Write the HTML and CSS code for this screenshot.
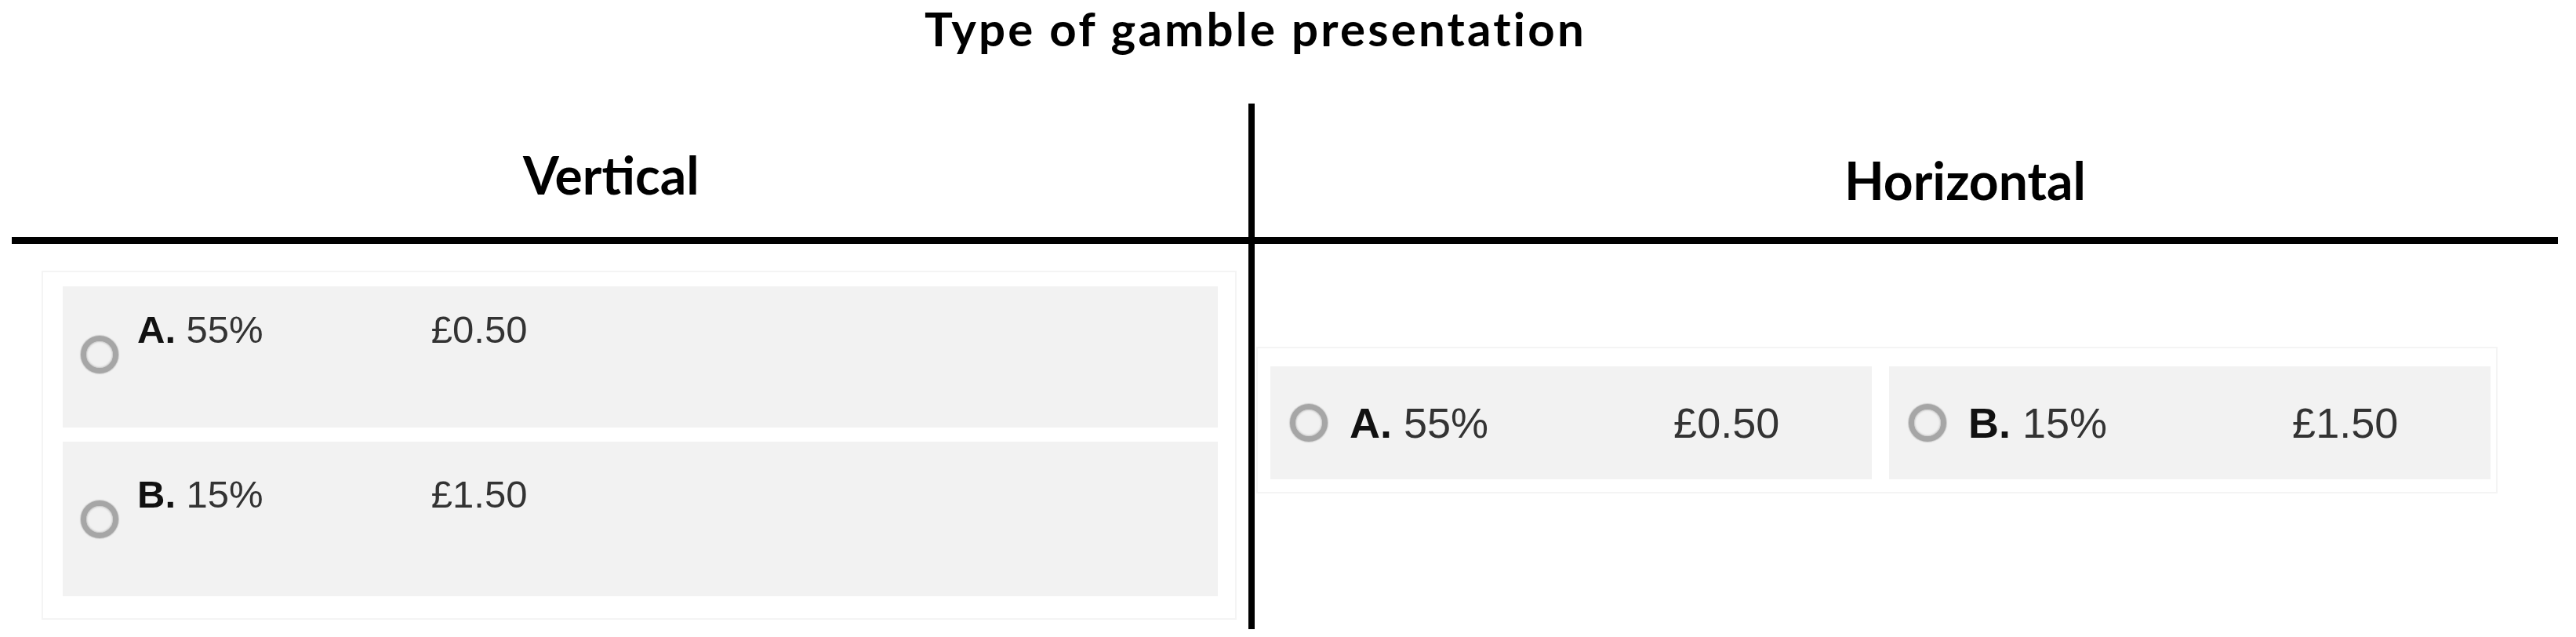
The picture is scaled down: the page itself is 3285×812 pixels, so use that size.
FILE: index.html
```html
<!DOCTYPE html>
<html lang="en">
<head>
<meta charset="utf-8">
<title>Type of gamble presentation</title>
<link rel="stylesheet" href="styles.css">
</head>
<body>
<div class="page">
  <div class="title">Type of gamble presentation</div>
  <div class="table">
    <div class="head head-v">Vertical</div>
    <div class="divider"></div>
    <div class="head head-h">Horizontal</div>
    <div class="rule"></div>
    <div class="cell cell-v">
      <div class="frame frame-v">
        <div class="option option-v option-a">
          <span class="radio"></span>
          <span class="label"><b>A.</b> 55%</span>
          <span class="amount">£0.50</span>
        </div>
        <div class="option option-v option-b">
          <span class="radio"></span>
          <span class="label"><b>B.</b> 15%</span>
          <span class="amount">£1.50</span>
        </div>
      </div>
    </div>
    <div class="cell cell-h">
      <div class="frame frame-h">
        <div class="option option-h">
          <span class="radio"></span>
          <span class="label"><b>A.</b> 55%</span>
          <span class="amount">£0.50</span>
        </div>
        <div class="option option-h">
          <span class="radio"></span>
          <span class="label"><b>B.</b> 15%</span>
          <span class="amount">£1.50</span>
        </div>
      </div>
    </div>
  </div>
</div>
</body>
</html>
```

FILE: styles.css
```css
* {
  box-sizing: border-box;
}

html, body {
  margin: 0;
  padding: 0;
  background: #ffffff;
}

.page {
  width: 3285px;
  height: 812px;
  overflow: hidden;
  color: #000;
}

.title {
  width: 3202px;
  height: 132px;
  padding-top: 0;
  text-align: center;
  font-family: Lato, "Open Sans", sans-serif;
  font-weight: 700;
  font-size: 60px;
  line-height: 72px;
  letter-spacing: 3.2px;
}

.table {
  display: grid;
  margin-left: 15px;
  grid-template-columns: 1577px 8px 1662px;
  grid-template-rows: 170px 9px 491px;
}

.head {
  font-family: Lato, "Open Sans", sans-serif;
  font-weight: 700;
  font-size: 66px;
  line-height: 79px;
  white-space: nowrap;
}

.head-v {
  grid-column: 1;
  grid-row: 1;
  padding-left: 652px;
  padding-top: 51px;
}

.head-h {
  grid-column: 3;
  grid-row: 1;
  padding-left: 752px;
  padding-top: 58px;
}

.divider {
  grid-column: 2;
  grid-row: 1 / 4;
  background: #000;
}

.rule {
  grid-column: 1 / 4;
  grid-row: 2;
  background: #000;
}

.cell-v {
  grid-column: 1;
  grid-row: 3;
}

.cell-h {
  grid-column: 3;
  grid-row: 3;
}

.frame {
  border: 2px solid #f4f4f4;
  display: flex;
}

.frame-v {
  margin-top: 34px;
  margin-left: 38px;
  width: 1524px;
  flex-direction: column;
  gap: 18px;
  padding: 18px 22px 28px 25px;
}

.frame-h {
  margin-top: 131px;
  margin-left: 2px;
  width: 1583px;
  gap: 22px;
  padding: 23px 7px 16px 16px;
}

.option {
  display: flex;
  background: #f2f2f2;
  font-family: "Liberation Sans", Arial, sans-serif;
  color: #333;
  white-space: nowrap;
}

.option b {
  color: #111;
  font-weight: 700;
}

.option-v {
  align-items: flex-start;
  padding-left: 23px;
  font-size: 49px;
  line-height: 56px;
}

.option-a {
  height: 180px;
  padding-top: 27px;
}

.option-b {
  height: 197px;
  padding-top: 39px;
}

.option-h {
  flex: 0 0 767px;
  height: 144px;
  align-items: center;
  padding-left: 25px;
  font-size: 54px;
  line-height: 62px;
}

.radio {
  flex: 0 0 48px;
  width: 48px;
  height: 48px;
  border-radius: 50%;
  border: 7px solid #a6a6a6;
  background: #f1f1f1;
  box-shadow: 0 0 1px 1px rgba(170, 170, 170, 0.5), inset 0 0 2px 1px rgba(150, 150, 150, 0.45);
}

.option-v .radio {
  margin-top: 36px;
  margin-right: 24px;
}

.option-h .radio {
  margin-right: 28px;
}

.label {
  display: inline-block;
  width: 7.65em;
}
```
